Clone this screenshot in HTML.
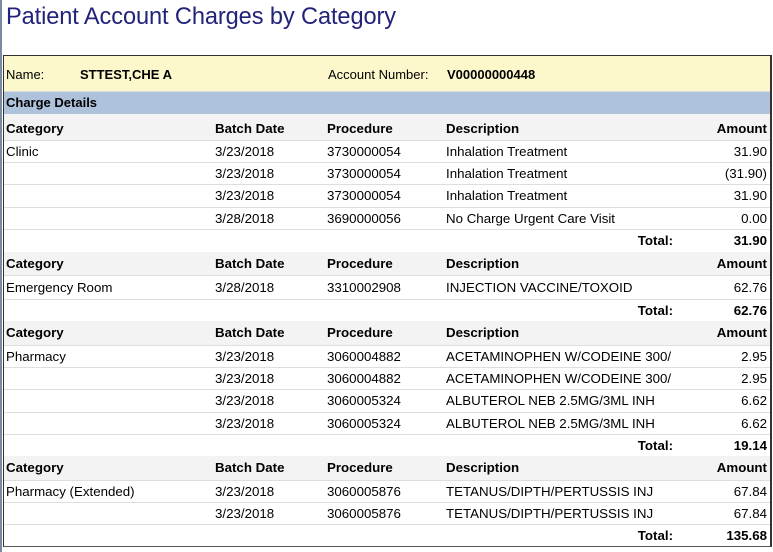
<!DOCTYPE html>
<html><head><style>
body{margin:0;width:773px;height:552px;overflow:hidden;background:#fff;font-family:"Liberation Sans",sans-serif;position:relative}
.lb{position:absolute;left:0;top:0;width:2px;height:552px;background:#7a8aa0}
h1{position:absolute;left:6px;top:4px;margin:0;font-weight:normal;font-size:23.6px;color:#23237a;letter-spacing:-0.1px}
.box{position:absolute;left:3px;top:55px;width:766px;height:490px;border:1px solid #333;border-right-width:2px;border-bottom:1px solid #555;overflow:hidden}
.yel{height:35px;background:#fcf8cc;position:relative;font-size:13px;border-bottom:1px solid #ddd}
.yel span{position:absolute;top:11px}
.blue{height:22px;background:#aec2dc;font-weight:bold;font-size:13px;line-height:22px;padding-left:2px}
table{border-collapse:collapse;width:766px;font-size:13.3px;table-layout:fixed}
td{padding:0 2px;white-space:nowrap;overflow:visible;border-bottom:1px solid #dedede}
tr.h td{background:#f3f3f3;font-weight:bold}
tr.t td{font-weight:bold;border-bottom:none}
td.r{text-align:right;padding-right:3px;position:relative}
td.r b{position:absolute;right:97px}
</style></head><body>
<div class="lb"></div>
<h1>Patient Account Charges by Category</h1>
<div class="box">
<div class="yel"><span style="left:2px">Name:</span><span style="left:76px;font-weight:bold">STTEST,CHE A</span><span style="left:324px">Account Number:</span><span style="left:443px;font-weight:bold">V00000000448</span></div>
<div class="blue">Charge Details</div>
<table>
<colgroup><col style="width:209px"><col style="width:112px"><col style="width:119px"><col style="width:200px"><col style="width:126px"></colgroup>
<tr class="h" style="height:26px"><td style="padding-top:4px">Category</td><td style="padding-top:4px">Batch Date</td><td style="padding-top:4px">Procedure</td><td style="padding-top:4px">Description</td><td class="r" style="padding-top:4px">Amount</td></tr>
<tr style="height:22px"><td>Clinic</td><td>3/23/2018</td><td>3730000054</td><td>Inhalation Treatment</td><td class="r">31.90</td></tr>
<tr style="height:22px"><td></td><td>3/23/2018</td><td>3730000054</td><td>Inhalation Treatment</td><td class="r">(31.90)</td></tr>
<tr style="height:23px"><td></td><td>3/23/2018</td><td>3730000054</td><td>Inhalation Treatment</td><td class="r">31.90</td></tr>
<tr style="height:22px"><td></td><td>3/28/2018</td><td>3690000056</td><td>No Charge Urgent Care Visit</td><td class="r">0.00</td></tr>
<tr class="t" style="height:23px"><td></td><td></td><td></td><td></td><td class="r"><b>Total:</b>31.90</td></tr>
<tr class="h" style="height:23px"><td>Category</td><td>Batch Date</td><td>Procedure</td><td>Description</td><td class="r">Amount</td></tr>
<tr style="height:24px"><td>Emergency Room</td><td>3/28/2018</td><td>3310002908</td><td>INJECTION VACCINE/TOXOID</td><td class="r">62.76</td></tr>
<tr class="t" style="height:22px"><td></td><td></td><td></td><td></td><td class="r"><b>Total:</b>62.76</td></tr>
<tr class="h" style="height:24px"><td>Category</td><td>Batch Date</td><td>Procedure</td><td>Description</td><td class="r">Amount</td></tr>
<tr style="height:22px"><td>Pharmacy</td><td>3/23/2018</td><td>3060004882</td><td>ACETAMINOPHEN W/CODEINE 300/</td><td class="r">2.95</td></tr>
<tr style="height:22px"><td></td><td>3/23/2018</td><td>3060004882</td><td>ACETAMINOPHEN W/CODEINE 300/</td><td class="r">2.95</td></tr>
<tr style="height:23px"><td></td><td>3/23/2018</td><td>3060005324</td><td>ALBUTEROL NEB 2.5MG/3ML INH</td><td class="r">6.62</td></tr>
<tr style="height:22px"><td></td><td>3/23/2018</td><td>3060005324</td><td>ALBUTEROL NEB 2.5MG/3ML INH</td><td class="r">6.62</td></tr>
<tr class="t" style="height:22px"><td></td><td></td><td></td><td></td><td class="r"><b>Total:</b>19.14</td></tr>
<tr class="h" style="height:24px"><td>Category</td><td>Batch Date</td><td>Procedure</td><td>Description</td><td class="r">Amount</td></tr>
<tr style="height:22px"><td>Pharmacy (Extended)</td><td>3/23/2018</td><td>3060005876</td><td>TETANUS/DIPTH/PERTUSSIS INJ</td><td class="r">67.84</td></tr>
<tr style="height:22px"><td></td><td>3/23/2018</td><td>3060005876</td><td>TETANUS/DIPTH/PERTUSSIS INJ</td><td class="r">67.84</td></tr>
<tr class="t" style="height:23px"><td></td><td></td><td></td><td></td><td class="r"><b>Total:</b>135.68</td></tr>
</table>
</div>
</body></html>
